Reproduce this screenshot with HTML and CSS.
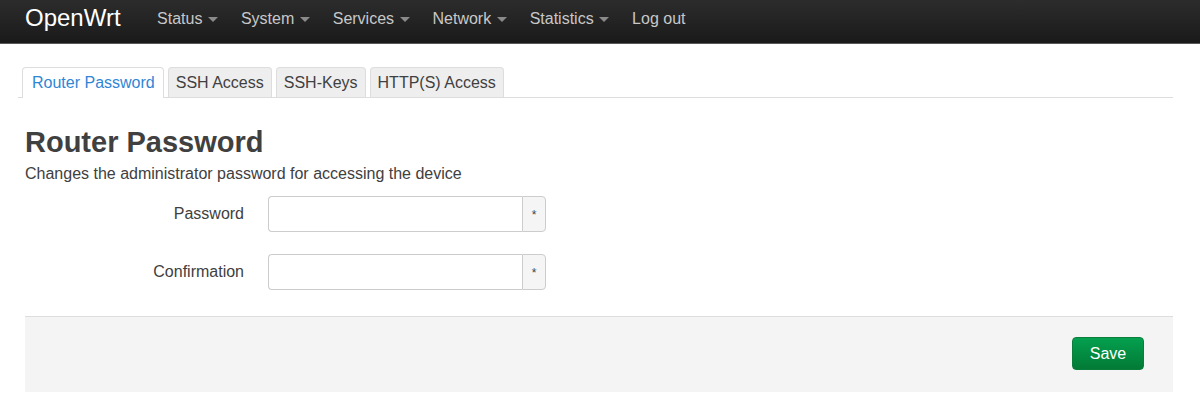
FILE: index.html
```html
<!DOCTYPE html>
<html lang="en">
<head>
<meta charset="utf-8">
<title>OpenWrt - Router Password</title>
<link rel="stylesheet" href="styles.css">
</head>
<body>
<header class="navbar">
  <a class="brand" href="#">OpenWrt</a>
  <ul class="nav">
    <li><a href="#">Status <span class="caret"></span></a></li>
    <li><a href="#">System <span class="caret"></span></a></li>
    <li><a href="#">Services <span class="caret"></span></a></li>
    <li><a href="#">Network <span class="caret"></span></a></li>
    <li><a href="#">Statistics <span class="caret"></span></a></li>
    <li><a href="#">Log out</a></li>
  </ul>
</header>
<main class="main">
  <ul class="tabs">
    <li class="tab active"><a href="#">Router Password</a></li>
    <li class="tab"><a href="#">SSH Access</a></li>
    <li class="tab"><a href="#">SSH-Keys</a></li>
    <li class="tab"><a href="#">HTTP(S) Access</a></li>
  </ul>
  <h2 class="title">Router Password</h2>
  <p class="desc">Changes the administrator password for accessing the device</p>
  <div class="fields">
    <div class="row">
      <label class="label">Password</label>
      <div class="input-group">
        <input class="input" type="password">
        <span class="addon">*</span>
      </div>
    </div>
    <div class="row">
      <label class="label">Confirmation</label>
      <div class="input-group">
        <input class="input" type="password">
        <span class="addon">*</span>
      </div>
    </div>
  </div>
  <div class="actions">
    <button class="btn-save" type="button">Save</button>
  </div>
</main>
</body>
</html>
```

FILE: styles.css
```css
* { box-sizing: border-box; }
html, body { margin: 0; padding: 0; background: #fff; }
body {
  font-family: "Liberation Sans", Arial, sans-serif;
  font-size: 16px;
  color: #404040;
}
a { text-decoration: none; }

.navbar {
  height: 44px;
  display: flex;
  align-items: center;
  padding: 0 25px 6px;
  background: linear-gradient(to bottom, #2c2c2c, #1a1a1a);
  border-bottom: 1px solid #5a5a5a;
}
.brand {
  color: #fff;
  font-size: 24px;
  margin-right: 25px;
  padding-bottom: 2px;
}
.nav {
  list-style: none;
  display: flex;
  margin: 0;
  padding: 0;
}
.nav a {
  display: block;
  color: #c8c8c8;
  font-size: 16px;
  padding: 0 11.5px;
  line-height: 30px;
}
.caret {
  display: inline-block;
  width: 0;
  height: 0;
  border-top: 5px solid #8a8a8a;
  border-left: 5px solid transparent;
  border-right: 5px solid transparent;
  vertical-align: middle;
  margin-left: 1px;
}

.main { padding: 23px 27px 0 18px; }

.tabs {
  list-style: none;
  display: flex;
  gap: 4px;
  margin: 0;
  padding: 0 0 0 4px;
  border-bottom: 1px solid #ddd;
}
.tab {
  margin-bottom: -1px;
}
.tab a {
  display: block;
  padding: 5px 7px;
  line-height: 19px;
  font-size: 16px;
  color: #404040;
  background: #eee;
  border: 1px solid #ddd;
  border-bottom: 0;
  border-radius: 4px 4px 0 0;
}
.tab.active a {
  background: #fff;
  color: #2f86d6;
  border-color: #ddd;
  padding: 5px 8px 6px 9px;
}

.title {
  margin: 28px 0 0 7px;
  font-size: 29px;
  font-weight: bold;
  line-height: 32px;
  color: #404040;
}
.desc {
  margin: 6px 0 0 7px;
  font-size: 16px;
  line-height: 20px;
}

.fields {
  padding-top: 12px;
  display: flex;
  flex-direction: column;
  gap: 22px;
}
.row {
  display: flex;
  align-items: center;
}
.label {
  width: 250px;
  text-align: right;
  padding-right: 24px;
  color: #404040;
}
.input-group {
  display: flex;
  width: 278px;
  height: 36px;
}
.input {
  flex: 1;
  min-width: 0;
  border: 1px solid #ccc;
  border-right: 0;
  border-radius: 4px 0 0 4px;
  font: inherit;
  padding: 4px 8px;
}
.addon {
  width: 24px;
  display: flex;
  align-items: center;
  justify-content: center;
  background: #f5f5f5;
  border: 1px solid #ccc;
  border-radius: 0 4px 4px 0;
  font-size: 12px;
  color: #444;
  padding-top: 2px;
}

.actions {
  margin: 26px 0 0 7px;
  height: 76px;
  background: #f4f4f4;
  border-top: 1px solid #ddd;
  display: flex;
  justify-content: flex-end;
  align-items: center;
  padding: 0 29px 2px 0;
}
.btn-save {
  width: 72px;
  height: 33px;
  border: 1px solid #0a7f3c;
  border-radius: 4px;
  background: linear-gradient(to bottom, #04a04f, #027a35);
  color: #fff;
  font-family: inherit;
  font-size: 16px;
}
```
